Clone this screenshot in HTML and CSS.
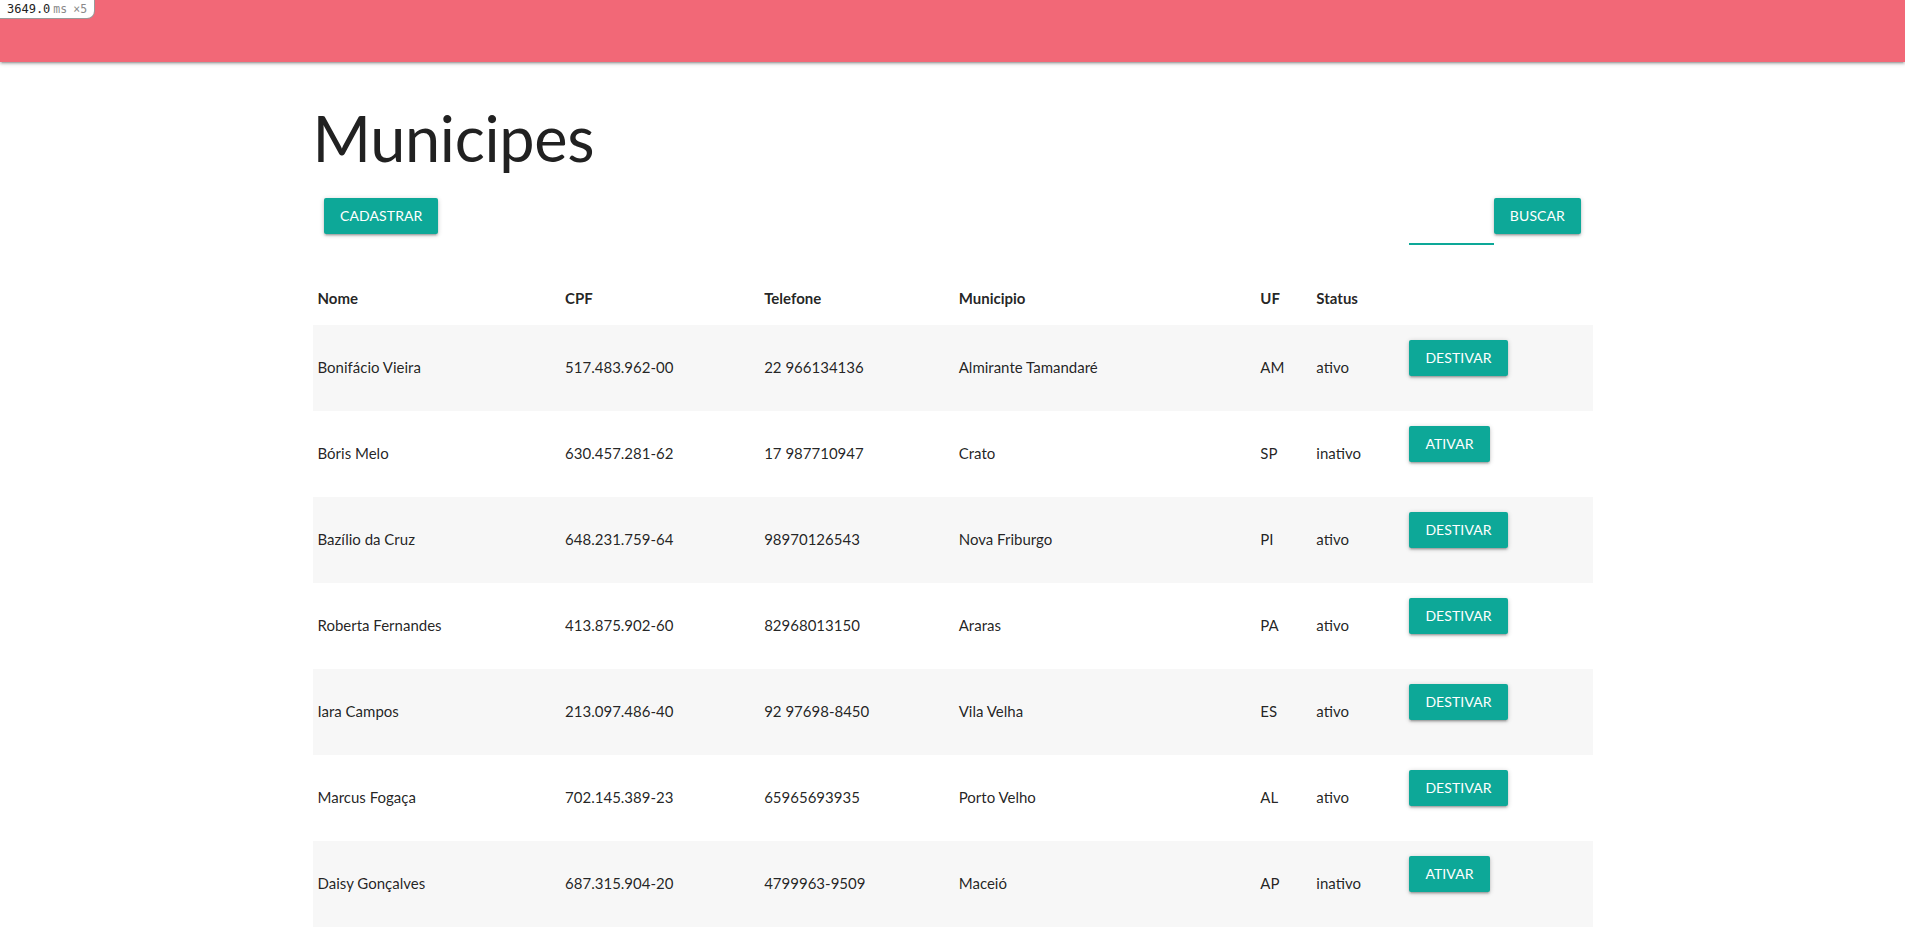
FILE: index.html
```html
<!DOCTYPE html>
<html lang="pt-BR">
<head>
<meta charset="utf-8">
<title>Municipes</title>
<link rel="stylesheet" href="styles.css">
</head>
<body>
<div class="perf-badge"><span class="perf-num">3649.0</span><span class="perf-unit">ms</span><span class="perf-count">×5</span></div>
<nav class="topbar"></nav>
<main class="container">
  <h1 class="page-title">Municipes</h1>
  <div class="actions">
    <button class="btn">Cadastrar</button>
    <div class="search">
      <input class="search-input" type="text">
      <button class="btn">Buscar</button>
    </div>
  </div>
  <table class="data-table">
    <colgroup>
      <col class="c-nome"><col class="c-cpf"><col class="c-tel"><col class="c-mun"><col class="c-uf"><col class="c-status"><col class="c-acao">
    </colgroup>
    <thead>
      <tr><th>Nome</th><th>CPF</th><th>Telefone</th><th>Municipio</th><th>UF</th><th>Status</th><th></th></tr>
    </thead>
    <tbody>
      <tr><td>Bonifácio Vieira</td><td>517.483.962-00</td><td>22 966134136</td><td>Almirante Tamandaré</td><td>AM</td><td>ativo</td><td><button class="btn btn-cell">Destivar</button></td></tr>
      <tr><td>Bóris Melo</td><td>630.457.281-62</td><td>17 987710947</td><td>Crato</td><td>SP</td><td>inativo</td><td><button class="btn btn-cell">Ativar</button></td></tr>
      <tr><td>Bazílio da Cruz</td><td>648.231.759-64</td><td>98970126543</td><td>Nova Friburgo</td><td>PI</td><td>ativo</td><td><button class="btn btn-cell">Destivar</button></td></tr>
      <tr><td>Roberta Fernandes</td><td>413.875.902-60</td><td>82968013150</td><td>Araras</td><td>PA</td><td>ativo</td><td><button class="btn btn-cell">Destivar</button></td></tr>
      <tr><td>Iara Campos</td><td>213.097.486-40</td><td>92 97698-8450</td><td>Vila Velha</td><td>ES</td><td>ativo</td><td><button class="btn btn-cell">Destivar</button></td></tr>
      <tr><td>Marcus Fogaça</td><td>702.145.389-23</td><td>65965693935</td><td>Porto Velho</td><td>AL</td><td>ativo</td><td><button class="btn btn-cell">Destivar</button></td></tr>
      <tr><td>Daisy Gonçalves</td><td>687.315.904-20</td><td>4799963-9509</td><td>Maceió</td><td>AP</td><td>inativo</td><td><button class="btn btn-cell">Ativar</button></td></tr>
    </tbody>
  </table>
</main>
</body>
</html>
```

FILE: styles.css
```css
html, body {
  margin: 0;
  padding: 0;
  height: 929px;
  overflow: hidden;
}

body {
  font-family: "Lato", "Noto Sans", sans-serif;
  font-size: 15px;
  line-height: 1.5;
  color: rgba(0, 0, 0, 0.87);
  background: #fff;
}

.perf-badge {
  position: absolute;
  top: 0;
  left: 0;
  z-index: 10;
  height: 18px;
  padding: 0 7px 0 7px;
  background: #fff;
  border: 1px solid #9a9a9a;
  border-top: none;
  border-left: none;
  border-bottom-right-radius: 8px;
  font-family: "DejaVu Sans Mono", "Liberation Mono", monospace;
  font-size: 12px;
  line-height: 18px;
  display: flex;
  align-items: baseline;
}

.perf-num { color: #222; }
.perf-unit { color: #8a8a8a; margin-left: 3px; font-size: 11.5px; }
.perf-count { color: #8a8a8a; margin-left: 6px; font-size: 11.5px; }

.topbar {
  height: 62px;
  background: #f26877;
  box-shadow: 0 2px 2px 0 rgba(0, 0, 0, 0.14), 0 3px 1px -2px rgba(0, 0, 0, 0.12), 0 1px 5px 0 rgba(0, 0, 0, 0.2);
}

.container {
  max-width: 1280px;
  margin: 0 auto;
}

.page-title {
  margin: 41px 0 0 0;
  font-size: 63px;
  font-weight: 400;
  line-height: 70px;
  color: #212121;
  letter-spacing: -0.3px;
}

.actions {
  display: flex;
  justify-content: space-between;
  align-items: flex-start;
  padding: 0 11.5px;
  margin-top: 25px;
}

.search {
  display: flex;
  align-items: flex-start;
}

.search-input {
  width: 85px;
  height: 45px;
  box-sizing: content-box;
  border: none;
  border-bottom: 2px solid #0da898;
  outline: none;
  background: transparent;
  padding: 0;
  margin: 0;
}

.btn {
  display: inline-block;
  height: 36px;
  line-height: 36px;
  padding: 0 16px;
  border: none;
  border-radius: 2px;
  background: #0da898;
  color: #fff;
  font-family: "Lato", "Noto Sans", sans-serif;
  font-size: 14px;
  letter-spacing: 0.1px;
  text-transform: uppercase;
  box-shadow: 0 2px 2px 0 rgba(0, 0, 0, 0.14), 0 3px 1px -2px rgba(0, 0, 0, 0.12), 0 1px 5px 0 rgba(0, 0, 0, 0.2);
  cursor: pointer;
}

.data-table {
  width: 100%;
  table-layout: fixed;
  border-collapse: collapse;
  margin-top: 27px;
}

.c-nome { width: 247.5px; }
.c-cpf { width: 199px; }
.c-tel { width: 194.5px; }
.c-mun { width: 301.5px; }
.c-uf { width: 56px; }
.c-status { width: 93px; }
.c-acao { width: 188px; }

.data-table th,
.data-table td {
  padding: 15px 5px;
  text-align: left;
  vertical-align: middle;
  line-height: 22.5px;
}

.data-table th {
  font-weight: 700;
}

.data-table tbody tr:nth-child(odd) {
  background: #f7f7f7;
}

.btn-cell {
  display: block;
  margin-bottom: 20px;
}
```
